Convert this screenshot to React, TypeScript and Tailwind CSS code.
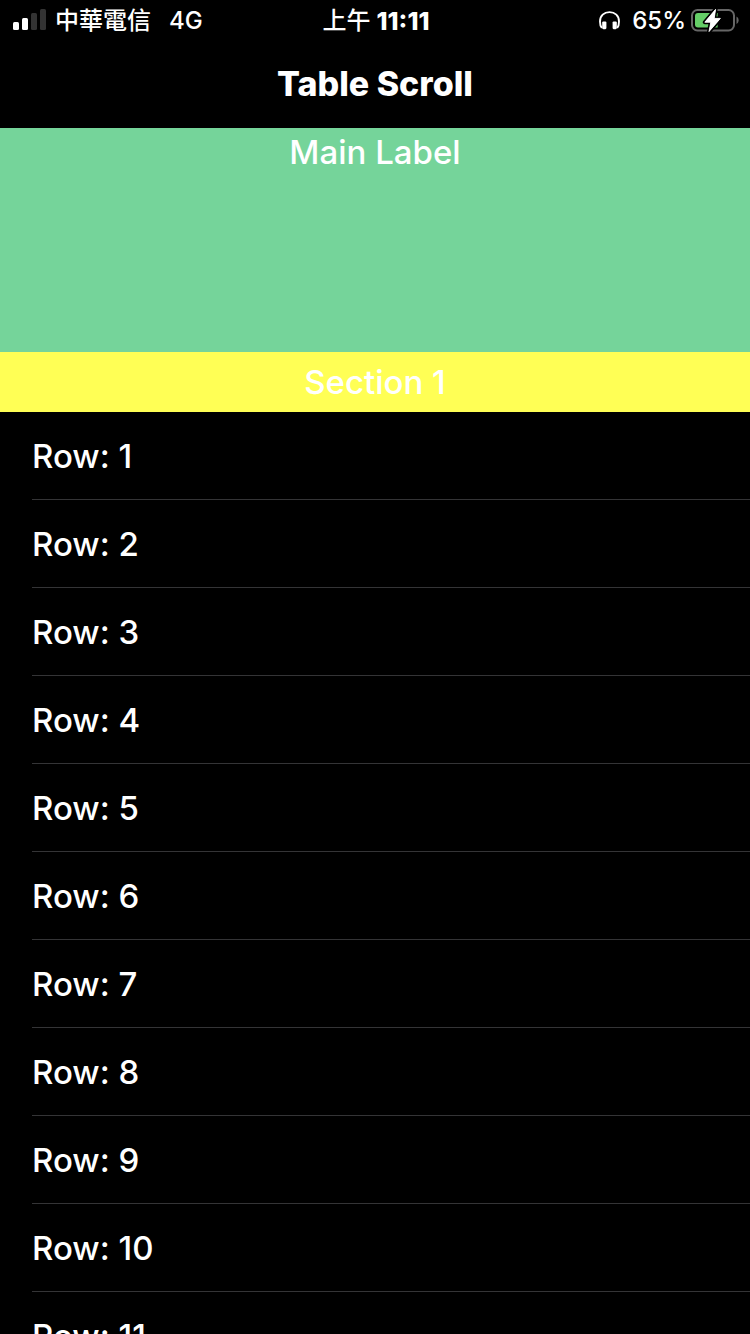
const rows = Array.from({ length: 11 }, (_, i) => i + 1);

function SignalIcon() {
  return (
    <svg width="33" height="24" viewBox="0 0 33 24" aria-hidden="true">
      <rect x="0" y="13" width="6" height="8" rx="1.5" fill="#fff" />
      <rect x="9" y="9" width="6" height="12" rx="1.5" fill="#fff" />
      <rect x="18" y="4" width="6" height="17" rx="1.5" fill="#333" />
      <rect x="27" y="0" width="6" height="21" rx="1.5" fill="#333" />
    </svg>
  );
}

function HeadphonesIcon() {
  return (
    <svg width="22" height="20" viewBox="0 0 22 20" aria-hidden="true">
      <path
        d="M2.8 17C1.5 15.4 1 13 1 10.4C1 4.8 5 1.1 10.5 1.1S20 4.8 20 10.4C20 13 19.5 15.4 18.2 17"
        fill="none"
        stroke="#fff"
        strokeWidth="1.9"
      />
      <rect x="3.2" y="10.4" width="4.2" height="7.8" rx="1.1" fill="#fff" />
      <rect x="13.6" y="10.4" width="4.2" height="7.8" rx="1.1" fill="#fff" />
    </svg>
  );
}

function BatteryIcon() {
  return (
    <svg width="48" height="26" viewBox="0 1 48 26" aria-hidden="true">
      <rect x="1" y="3" width="42" height="20.5" rx="5.5" fill="none" stroke="#666" strokeWidth="2" />
      <path d="M45.5 9.5C46.9 10.2 47.6 11.6 47.6 13.2S46.9 16.2 45.5 17Z" fill="#666" />
      <path d="M7 6H26.6V20.5H7Q4 20.5 4 17.5V9Q4 6 7 6Z" fill="#65ce67" />
      <path
        d="M24.6 2.3L13.8 15.2H19.8L18 24.6L29.4 11.4H23.2Z"
        fill="#fff"
        stroke="#000"
        strokeWidth="4"
        strokeLinejoin="round"
        paintOrder="stroke"
      />
      <path
        d="M24.6 2.3L13.8 15.2H19.8L18 24.6L29.4 11.4H23.2Z"
        fill="#fff"
        stroke="#fff"
        strokeWidth="0.8"
        strokeLinejoin="round"
      />
    </svg>
  );
}

export default function App() {
  return (
    <div className="flex h-screen flex-col overflow-hidden bg-black font-['Inter','Noto_Sans_CJK_TC',sans-serif] text-white">
      <div className="grid h-10 shrink-0 grid-cols-[1fr_auto_1fr] items-center pr-[11px] pl-[13px] text-[24px] leading-[42px]">
        <div className="flex items-center">
          <SignalIcon />
          <span lang="zh-Hant" className="pl-[9px] font-medium">中華電信</span>
          <span className="pl-[18px] font-medium">4G</span>
        </div>
        <div className="flex items-center gap-1.5">
          <span lang="zh-Hant" className="font-medium">上午</span>
          <span className="text-[25px] font-extrabold">11:11</span>
        </div>
        <div className="flex items-center justify-end">
          <HeadphonesIcon />
          <span className="pr-[5px] pl-[11px] font-medium">65%</span>
          <BatteryIcon />
        </div>
      </div>
      <header className="flex h-[88px] shrink-0 items-center justify-center">
        <h1 className="text-[34px] leading-10 font-extrabold">Table Scroll</h1>
      </header>
      <div className="h-56 shrink-0 bg-[#75d49a] pt-1 text-center text-[33px] leading-10 font-medium">
        Main Label
      </div>
      <h2 className="flex h-[60px] shrink-0 items-center justify-center bg-[#ffff55] text-[33px] leading-10 font-medium">
        Section 1
      </h2>
      <ul className="min-h-0 flex-1 overflow-hidden pl-8">
        {rows.map((n) => (
          <li key={n} className="flex h-[88px] items-center border-b border-[#343436] pt-0.5 text-[33px] font-medium">
            Row: {n}
          </li>
        ))}
      </ul>
    </div>
  );
}
